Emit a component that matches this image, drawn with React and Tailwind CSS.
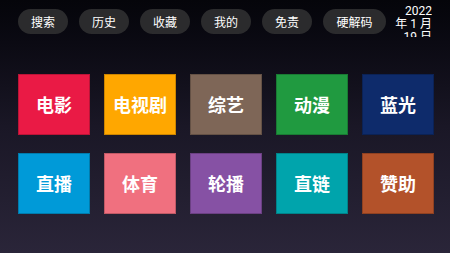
const menu = [
  { label: "搜索", w: "w-[50px]" },
  { label: "历史", w: "w-[50px]" },
  { label: "收藏", w: "w-[50px]" },
  { label: "我的", w: "w-[50px]" },
  { label: "免责", w: "w-[50px]" },
  { label: "硬解码", w: "w-[63px]" },
];

const tiles = [
  { label: "电影", bg: "bg-[#ea1a45]" },
  { label: "电视剧", bg: "bg-[#ffa700]" },
  { label: "综艺", bg: "bg-[#7e6657]" },
  { label: "动漫", bg: "bg-[#209a40]" },
  { label: "蓝光", bg: "bg-[#0e2b6b]" },
  { label: "直播", bg: "bg-[#009ad8]" },
  { label: "体育", bg: "bg-[#f0707f]" },
  { label: "轮播", bg: "bg-[#8651a4]" },
  { label: "直链", bg: "bg-[#00a4ac]" },
  { label: "赞助", bg: "bg-[#b3522a]" },
];

export default function App() {
  return (
    <div
      className="w-[450px] h-[253px] overflow-hidden bg-gradient-to-b from-[#05050a] via-[#1a1726] to-[#2a2539] text-white"
      style={{ fontFamily: '"Noto Sans CJK SC", "Noto Sans", sans-serif' }}
    >
      <div className="flex items-start pl-[18px] pr-[18px] pt-[5px]">
        <div className="flex gap-[11px] mt-[4px]">
          {menu.map((m) => (
            <button
              key={m.label}
              className={`${m.w} h-[25px] rounded-full bg-[#2b2b2d] text-[12px] leading-none text-white`}
            >
              {m.label}
            </button>
          ))}
        </div>
        <div
          className="ml-auto h-[32px] overflow-hidden text-right text-[12px] leading-[13px]"
          style={{ fontFamily: '"Roboto", "Noto Sans CJK SC", sans-serif' }}
        >
          <div>2022</div>
          <div>年 1 月</div>
          <div>19 日</div>
        </div>
      </div>

      <div className="grid grid-cols-[repeat(5,72px)] gap-x-[14px] gap-y-[18px] px-[18px] mt-[37px]">
        {tiles.map((t) => (
          <div
            key={t.label}
            className={`${t.bg} h-[61px] border border-black/20 flex items-center justify-center text-[18px] font-bold`}
          >
            {t.label}
          </div>
        ))}
      </div>
    </div>
  );
}
